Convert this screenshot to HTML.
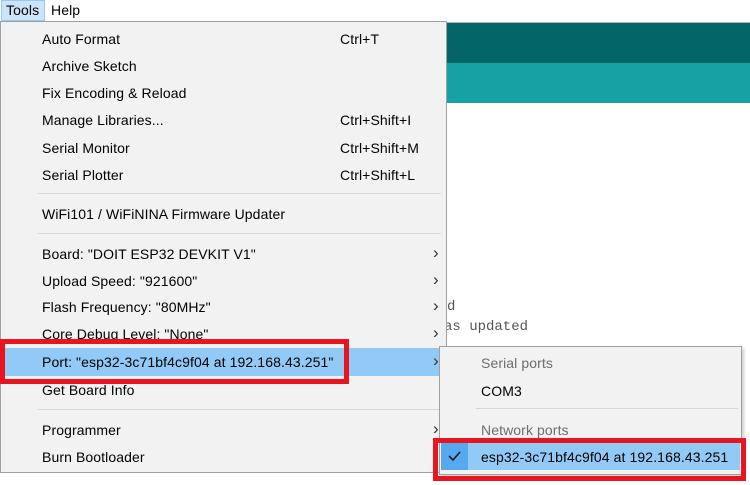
<!DOCTYPE html>
<html><head><meta charset="utf-8"><style>
*{margin:0;padding:0;box-sizing:border-box}
body{width:750px;height:485px;background:#fff;position:relative;overflow:hidden;font-family:"Liberation Sans",sans-serif;font-size:14px;color:#000}
.a{position:absolute}
.t{position:absolute;white-space:nowrap;line-height:16px;letter-spacing:0.1px}
.sep{position:absolute;height:1px;background:#d7d7d7}
.arr{position:absolute;left:433px;font-size:17px;line-height:16px;color:#333}
.mono{font-family:"Liberation Mono",monospace;font-size:14px;color:#555;position:absolute;white-space:nowrap}
</style></head><body>
<div class="a" style="left:0;top:0;width:750px;height:21px;background:#fff"></div>
<div class="a" style="left:1px;top:0;width:44px;height:21px;background:#cce4f7;border:1px solid #99c9ef"></div>
<div class="t" style="left:6px;top:2px">Tools</div>
<div class="t" style="left:51px;top:2px">Help</div>
<div class="a" style="left:445px;top:22px;width:305px;height:41px;background:#036567;border-top:1px solid #bbb"></div>
<div class="a" style="left:445px;top:63px;width:305px;height:40px;background:#17a1a5"></div>
<div class="mono" style="left:447px;top:299px">d</div>
<div class="mono" style="left:444px;top:319px">as updated</div>
<div class="a" style="left:0;top:21px;width:447px;height:452px;background:#f2f2f2;border:1px solid #a0a0a0"></div>
<div class="t" style="left:42px;top:31px">Auto Format</div><div class="t" style="left:340px;top:31px">Ctrl+T</div>
<div class="t" style="left:42px;top:58px">Archive Sketch</div>
<div class="t" style="left:42px;top:85px">Fix Encoding &amp; Reload</div>
<div class="t" style="left:42px;top:112px">Manage Libraries...</div><div class="t" style="left:340px;top:112px">Ctrl+Shift+I</div>
<div class="t" style="left:42px;top:140px">Serial Monitor</div><div class="t" style="left:340px;top:140px">Ctrl+Shift+M</div>
<div class="t" style="left:42px;top:167px">Serial Plotter</div><div class="t" style="left:340px;top:167px">Ctrl+Shift+L</div>
<div class="sep" style="left:38px;top:193px;width:403px"></div>
<div class="t" style="left:42px;top:206px">WiFi101 / WiFiNINA Firmware Updater</div>
<div class="sep" style="left:38px;top:233px;width:403px"></div>
<div class="t" style="left:42px;top:246px">Board: "DOIT ESP32 DEVKIT V1"</div><div class="arr" style="top:245px">›</div>
<div class="t" style="left:42px;top:273px">Upload Speed: "921600"</div><div class="arr" style="top:272px">›</div>
<div class="t" style="left:42px;top:299px">Flash Frequency: "80MHz"</div><div class="arr" style="top:298px">›</div>
<div class="t" style="left:42px;top:326px">Core Debug Level: "None"</div><div class="arr" style="top:325px">›</div>
<div class="a" style="left:2px;top:348px;width:443px;height:28px;background:#91c9f7"></div>
<div class="t" style="left:42px;top:354px">Port: "esp32-3c71bf4c9f04 at 192.168.43.251"</div><div class="arr" style="top:353px">›</div>
<div class="t" style="left:42px;top:382px">Get Board Info</div>
<div class="sep" style="left:38px;top:409px;width:403px"></div>
<div class="t" style="left:42px;top:422px">Programmer</div><div class="arr" style="top:421px">›</div>
<div class="t" style="left:42px;top:449px">Burn Bootloader</div>
<div class="a" style="left:0;top:339px;width:349px;height:45px;border:5px solid #e8141f"></div>
<div class="a" style="left:439px;top:346px;width:303px;height:129px;background:#f2f2f2;border:1px solid #a0a0a0;box-shadow:2px 2px 3px rgba(0,0,0,.2)"></div>
<div class="t" style="left:481px;top:355px;color:#6d6d6d">Serial ports</div>
<div class="t" style="left:481px;top:383px">COM3</div>
<div class="sep" style="left:476px;top:408px;width:262px"></div>
<div class="t" style="left:481px;top:422px;color:#6d6d6d">Network ports</div>
<div class="a" style="left:441px;top:443px;width:299px;height:27px;background:#91c9f7"></div>
<div class="a" style="left:441px;top:443px;width:27px;height:27px;background:#56a9ee"></div>
<svg class="a" style="left:447px;top:449px" width="16" height="14"><path d="M2 7 L6 11 L13 3" fill="none" stroke="#1a1a1a" stroke-width="1.6"/></svg>
<div class="t" style="left:481px;top:449px">esp32-3c71bf4c9f04 at 192.168.43.251</div>
<div class="a" style="left:433px;top:438px;width:313px;height:43px;border:5px solid #e8141f"></div>
</body></html>
